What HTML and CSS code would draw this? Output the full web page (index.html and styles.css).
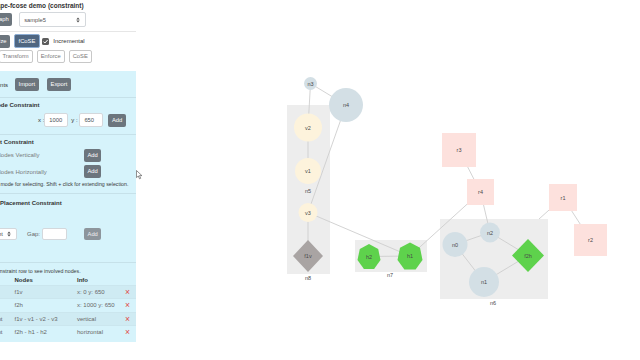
FILE: index.html
```html
<!DOCTYPE html>
<html>
<head>
<meta charset="utf-8">
<title>cytoscape-fcose demo (constraint)</title>
<link rel="stylesheet" href="styles.css">
</head>
<body>
<div class="page">
  <aside class="side">
    <div class="top">
      <h1 class="title">cytoscape-fcose demo (constraint)</h1>
      <div class="row r-graph">
        <button class="btn b-graph">Graph</button>
        <div class="select s-sample"><span>sample5</span>
          <svg class="arrows" width="4" height="6" viewBox="0 0 4 6"><path d="M0.3 2.4 L2 0.6 L3.7 2.4 Z M0.3 3.6 L2 5.4 L3.7 3.6 Z" fill="#555"/></svg>
        </div>
      </div>
      <div class="sep-top"></div>
      <div class="row r-layout">
        <button class="btn b-rand">Randomize</button>
        <button class="btn btn-blue">fCoSE</button>
        <span class="check"><svg width="7" height="7" viewBox="0 0 7 7"><path d="M1.5 3.6 L2.9 5 L5.6 2" fill="none" stroke="#fff" stroke-width="1"/></svg></span>
        <span class="lbl">Incremental</span>
      </div>
      <div class="row r-outline">
        <button class="btn btn-out b-trans">Transform</button>
        <button class="btn btn-out">Enforce</button>
        <button class="btn btn-out">CoSE</button>
      </div>
    </div>

    <div class="panel">
      <div class="row r-io">
        <span class="io-lbl">Constraints</span>
        <button class="btn b-import">Import</button>
        <button class="btn b-export">Export</button>
      </div>
      <div class="sep s1"></div>
      <h2 class="head h-fixed">Fixed Node Constraint</h2>
      <div class="row r-fixed">
        <span class="xy">x :</span>
        <div class="input">1000</div>
        <span class="xy xy-y">y :</span>
        <div class="input in-y">650</div>
        <button class="btn b-add-fixed">Add</button>
      </div>
      <div class="sep s2"></div>
      <h2 class="head h-align">Alignment Constraint</h2>
      <div class="row r-align r-vert">
        <span class="alab">Align Nodes Vertically</span>
        <button class="btn">Add</button>
      </div>
      <div class="row r-align r-hor">
        <span class="alab">Align Nodes Horizontally</span>
        <button class="btn">Add</button>
      </div>
      <p class="help h-sel">Use box selection mode for selecting. Shift + click for extending selection.</p>
      <div class="sep s3"></div>
      <h2 class="head h-rel">Relative Placement Constraint</h2>
      <div class="row r-rel">
        <div class="select s-dir"><span>left-right</span>
          <svg class="arrows" width="4" height="6" viewBox="0 0 4 6"><path d="M0.3 2.4 L2 0.6 L3.7 2.4 Z M0.3 3.6 L2 5.4 L3.7 3.6 Z" fill="#555"/></svg>
        </div>
        <span class="gap">Gap:</span>
        <div class="input in-gap"></div>
        <button class="btn btn-dis b-add-rel">Add</button>
      </div>
      <div class="sep s4"></div>
      <p class="help h-click">Click on a constraint row to see involved nodes.</p>
      <table class="ctable">
        <colgroup><col class="c1"><col class="c2"><col class="c3"><col class="c4"></colgroup>
        <thead><tr><th>Type</th><th>Nodes</th><th>Info</th><th></th></tr></thead>
        <tbody>
          <tr><td>Fixed</td><td>f1v</td><td>x: 0 y: 650</td><td class="del">&#215;</td></tr>
          <tr><td>Fixed</td><td>f2h</td><td>x: 1000 y: 650</td><td class="del">&#215;</td></tr>
          <tr><td>Alignment</td><td>f1v - v1 - v2 - v3</td><td>vertical</td><td class="del">&#215;</td></tr>
          <tr><td>Alignment</td><td>f2h - h1 - h2</td><td>horizontal</td><td class="del">&#215;</td></tr>
        </tbody>
      </table>
    </div>
  </aside>

  <svg class="graph" width="504" height="360" viewBox="136 0 504 360">
    <g class="compounds" fill="#ededed">
      <rect x="287" y="105" width="43" height="169"/>
      <rect x="355" y="240" width="72" height="32"/>
      <rect x="440" y="219" width="108" height="80"/>
    </g>
    <g class="edges" stroke="#cecece" stroke-width="0.9">
      <line x1="310.5" y1="83.5" x2="308" y2="127.5"/>
      <line x1="310.5" y1="83.5" x2="346" y2="105"/>
      <line x1="346" y1="105" x2="308" y2="212.5"/>
      <line x1="308" y1="127.5" x2="308" y2="171"/>
      <line x1="308" y1="212.5" x2="308" y2="256"/>
      <line x1="308" y1="212.5" x2="410" y2="256"/>
      <line x1="369" y1="256.5" x2="410" y2="256"/>
      <line x1="410" y1="256" x2="480.5" y2="192"/>
      <line x1="459" y1="150" x2="480.5" y2="192"/>
      <line x1="480.5" y1="192" x2="490" y2="232.5"/>
      <line x1="563" y1="197.5" x2="539" y2="219"/>
      <line x1="563" y1="197.5" x2="590.5" y2="240"/>
      <line x1="455" y1="244.5" x2="490" y2="232.5"/>
      <line x1="455" y1="244.5" x2="484" y2="282"/>
      <line x1="490" y1="232.5" x2="528" y2="255.5"/>
      <line x1="484" y1="282" x2="528" y2="255.5"/>
    </g>
    <g class="nodes">
      <circle cx="310.5" cy="83.5" r="6.5" fill="#d3dfe5"/>
      <circle cx="346" cy="105" r="17" fill="#d3dfe5"/>
      <circle cx="308" cy="127.5" r="14" fill="#fdf3dc"/>
      <circle cx="308" cy="171" r="13" fill="#fdf3dc"/>
      <circle cx="308" cy="212.5" r="9.5" fill="#fdf3dc"/>
      <polygon points="308,240 323,256 308,272 293,256" fill="#a9a4a3"/>
      <polygon points="369,244 378.2,248.9 380.5,260.1 374.1,269 363.9,269 357.5,260.1 359.8,248.9" fill="#5ed24c"/>
      <polygon points="410,242.5 420,247.8 422.5,259.9 415.6,269.5 404.4,269.5 397.5,259.9 400,247.8" fill="#5ed24c"/>
      <circle cx="455" cy="244.5" r="12.5" fill="#d3dfe5"/>
      <circle cx="490" cy="232.5" r="10" fill="#d3dfe5"/>
      <circle cx="484" cy="282" r="15" fill="#d3dfe5"/>
      <polygon points="528,239 544,255.5 528,272 512,255.5" fill="#5ed24c"/>
      <rect x="442" y="133" width="34" height="34" fill="#fde1dd"/>
      <rect x="467" y="179" width="27" height="26" fill="#fde1dd"/>
      <rect x="549" y="184" width="28" height="27" fill="#fde1dd"/>
      <rect x="574" y="224" width="33" height="32" fill="#fde1dd"/>
    </g>
    <g class="labels">
      <text x="310.5" y="83.5">n3</text>
      <text x="346" y="105">n4</text>
      <text x="308" y="127.5">v2</text>
      <text x="308" y="171">v1</text>
      <text x="308" y="191">n5</text>
      <text x="308" y="212.5">v3</text>
      <text x="308" y="256">f1v</text>
      <text x="308" y="278">n8</text>
      <text x="369" y="256.5">h2</text>
      <text x="410" y="256">h1</text>
      <text x="390" y="275">n7</text>
      <text x="455" y="244.5">n0</text>
      <text x="490" y="232.5">n2</text>
      <text x="484" y="282">n1</text>
      <text x="528" y="255.5">f2h</text>
      <text x="493" y="303">n6</text>
      <text x="459" y="150">r3</text>
      <text x="480.5" y="192">r4</text>
      <text x="563" y="197.5">r1</text>
      <text x="590.5" y="240">r2</text>
    </g>
  </svg>

  <svg class="cursor" width="7" height="10" viewBox="0 0 7 10">
    <path d="M0.5 0.5 L0.5 7.6 L2.3 6 L3.5 8.8 L4.7 8.3 L3.5 5.6 L5.9 5.6 Z" fill="#fff" stroke="#444" stroke-width="0.6"/>
  </svg>
</div>
</body>
</html>
```

FILE: styles.css
```css
* { box-sizing: border-box; }
html, body { margin: 0; padding: 0; }
body {
  width: 640px;
  height: 360px;
  overflow: hidden;
  background: #fff;
  font-family: "Liberation Sans", Arial, sans-serif;
  color: #333;
}
.page {
  position: relative;
  display: flex;
  width: 640px;
  height: 360px;
}
.side {
  width: 136px;
  flex: none;
  overflow: hidden;
  display: flex;
  flex-direction: column;
}
.top { display: flex; flex-direction: column; }
.title {
  margin: 2px 0 0 -24px;
  font-size: 6.5px;
  font-weight: bold;
  line-height: 8px;
  white-space: nowrap;
  color: #333;
}
.row { display: flex; align-items: center; white-space: nowrap; flex: none; }

.btn {
  flex: none;
  margin: 0;
  height: 13px;
  padding: 0 3.5px;
  border: 0;
  border-radius: 2px;
  background: #6c757d;
  color: #fff;
  font-family: "Liberation Sans", Arial, sans-serif;
  font-size: 5.8px;
  line-height: 13px;
  white-space: nowrap;
}
.btn-blue {
  height: 14px;
  line-height: 12px;
  margin-left: 4px;
  background: #4f6681;
  border: 1px solid #8eaed4;
}
.btn-out {
  background: #fff;
  color: #7a7a7a;
  border: 1px solid #c8c8c8;
  line-height: 11px;
  padding: 0 3px;
}
.btn-dis { background: #8d959c; color: #eef0f2; }

.r-graph { margin-top: 2px; height: 15px; }
.b-graph { margin-left: -11px; }
.select {
  flex: none;
  display: flex;
  align-items: center;
  justify-content: space-between;
  height: 15px;
  padding: 0 5px 0 4px;
  background: #fff;
  border: 1px solid #d4d8dc;
  border-radius: 2px;
  font-size: 5.8px;
  color: #555;
}
.s-sample { width: 67px; margin-left: 7px; }
.sep-top { height: 1px; margin-top: 4px; background: #e6e6e6; flex: none; }

.r-layout { margin-top: 2px; height: 14px; }
.b-rand { margin-left: -26.3px; }
.check {
  flex: none;
  width: 7px;
  height: 7px;
  margin-left: 2.5px;
  border-radius: 1.5px;
  background: #5d5d5d;
  display: flex;
}
.lbl { margin-left: 4px; font-size: 6px; color: #333; }

.r-outline { margin-top: 2px; height: 13px; gap: 4px; }
.b-trans { margin-left: -1.5px; }

.panel {
  margin-top: 8px;
  padding: 7px 0 3.8px 0;
  background: #d6f3fb;
  display: flex;
  flex-direction: column;
  flex: none;
}
.sep { height: 1px; background: rgba(0, 0, 0, 0.07); flex: none; }
.head {
  margin: 0;
  font-size: 6px;
  font-weight: bold;
  line-height: 8px;
  white-space: nowrap;
  color: #333;
}
.help {
  margin: 0;
  font-size: 5.25px;
  line-height: 8px;
  white-space: nowrap;
  color: #3a3a3a;
}

.r-io { height: 13px; }
.io-lbl { margin-left: -22.3px; font-size: 6px; color: #333; }
.b-import { margin-left: 7px; }
.b-export { margin-left: 8.6px; }
.s1 { margin-top: 5.5px; }
.h-fixed { margin: 3px 0 0 -24.5px; }

.r-fixed { margin-top: 4px; height: 15px; padding-left: 38px; }
.xy { font-size: 6px; color: #333; }
.xy-y { margin-left: 3px; }
.input {
  flex: none;
  height: 14px;
  width: 24px;
  padding-left: 4px;
  background: #fff;
  border: 1px solid #d4d8dc;
  border-radius: 2px;
  font-size: 5.8px;
  line-height: 12px;
  color: #495057;
}
.in-y { margin-left: 1.7px; }
.b-add-fixed { margin-left: 5px; }

.s2 { margin-top: 6px; }
.h-align { margin: 3px 0 0 -27.3px; }
.r-align { height: 13px; }
.r-vert { margin-top: 3px; }
.r-hor { margin-top: 3.5px; }
.alab {
  flex: none;
  width: 102.5px;
  margin-left: -18.5px;
  font-size: 6px;
  color: #7b7b7b;
}
.h-sel { margin: 2px 0 0 -42.5px; }

.s3 { margin-top: 4.5px; }
.h-rel { margin: 5px 0 0 -24.7px; }
.r-rel { margin-top: 20.5px; height: 13px; }
.s-dir { width: 40px; height: 12px; margin-left: -23px; color: #555; }
.gap { margin-left: 10px; font-size: 6px; color: #666; }
.in-gap { height: 12px; width: 25px; margin-left: 2px; }
.b-add-rel { margin-left: 17px; height: 12px; line-height: 12px; }

.s4 { margin-top: 21.5px; }
.h-click { margin: 4px 0 0 -30.3px; }

.ctable {
  margin-left: -30.2px;
  width: 166.2px;
  table-layout: fixed;
  border-collapse: collapse;
  font-size: 6px;
  flex: none;
}
.c1 { width: 38.7px; }
.c2 { width: 62.5px; }
.c3 { width: 50px; }
.c4 { width: 15px; }
.ctable th, .ctable td {
  padding: 0 6px;
  text-align: left;
  white-space: nowrap;
  overflow: hidden;
}
.ctable th { height: 11px; font-weight: bold; color: #333; }
.ctable td { height: 13.3px; color: #686868; border-top: 1px solid rgba(0, 0, 0, 0.05); }
.ctable tbody tr:nth-child(odd) { background: rgba(0, 0, 0, 0.03); }
.ctable td.del { padding: 0 0 0 4px; color: #e04848; font-size: 8.5px; }

.graph { flex: none; display: block; }
.labels text {
  font-family: "Liberation Sans", Arial, sans-serif;
  font-size: 5.5px;
  fill: #4a4a4a;
  text-anchor: middle;
  dominant-baseline: central;
}
.cursor { position: absolute; left: 135.5px; top: 170px; }
```
